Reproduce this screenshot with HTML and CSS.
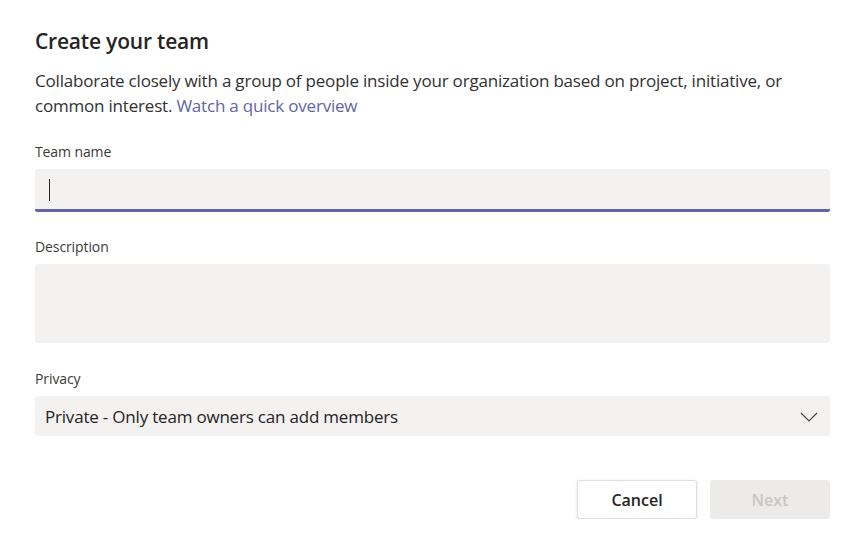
FILE: index.html
```html
<!DOCTYPE html>
<html>
<head>
<meta charset="utf-8">
<link rel="stylesheet" href="styles.css">
</head>
<body>
<div class="dialog">
  <h1 class="title">Create your team</h1>
  <p class="intro">Collaborate closely with a group of people inside your organization based on project, initiative, or common interest. <a class="link" href="#">Watch a quick overview</a></p>
  <div class="field field-name">
    <label class="label">Team name</label>
    <div class="input focused"><span class="caret"></span></div>
  </div>
  <div class="field field-desc">
    <label class="label">Description</label>
    <div class="textarea"></div>
  </div>
  <div class="field field-privacy">
    <label class="label">Privacy</label>
    <div class="select">
      <span class="select-text">Private - Only team owners can add members</span>
      <svg class="chevron" width="18" height="10" viewBox="0 0 18 10"><path d="M1 1 L9 9 L17 1" fill="none" stroke="#484644" stroke-width="1.2"/></svg>
    </div>
  </div>
  <div class="actions">
    <button class="btn btn-cancel">Cancel</button>
    <button class="btn btn-next">Next</button>
  </div>
</div>
</body>
</html>
```
FILE: styles.css
```css
* { box-sizing: border-box; }
html, body { margin: 0; padding: 0; background: #fff; }
body {
  font-family: "Open Sans", "Noto Sans", sans-serif;
  color: #252423;
}
.dialog {
  width: 861px;
  padding: 26px 31px 0 35px;
}
.title {
  margin: 0;
  font-size: 21px;
  font-weight: 600;
  line-height: 30px;
  letter-spacing: -0.2px;
}
.intro {
  margin: 12px 0 0;
  font-size: 17px;
  line-height: 25px;
  color: #323130;
  letter-spacing: -0.2px;
}
.link { color: #6264a7; text-decoration: none; }
.field { display: flex; flex-direction: column; }
.label {
  font-size: 14px;
  line-height: 20px;
  color: #3b3a39;
  letter-spacing: -0.1px;
}
.field-name { margin-top: 24px; }
.field-name .label { margin-bottom: 7px; }
.input {
  height: 43px;
  background: #f3f2f1;
  border-bottom: 3px solid #6264a7;
  border-radius: 3px 3px 2px 2px;
  display: flex;
  align-items: center;
  padding-left: 14px;
}
.caret {
  display: block;
  width: 1px;
  height: 22px;
  background: #252423;
  margin-top: 1px;
}
.field-desc { margin-top: 25px; }
.field-desc .label { margin-bottom: 7px; }
.textarea {
  height: 79px;
  background: #f3f2f1;
  border-radius: 3px;
}
.field-privacy { margin-top: 26px; }
.field-privacy .label { margin-bottom: 7px; }
.select {
  height: 40px;
  background: #f3f2f1;
  border-radius: 3px;
  display: flex;
  align-items: center;
  justify-content: space-between;
  padding: 0 12px 0 10px;
}
.select-text {
  font-size: 17px;
  color: #252423;
  letter-spacing: -0.2px;
}
.chevron { display: block; margin-top: 1px; }
.actions {
  display: flex;
  justify-content: flex-end;
  gap: 13px;
  margin-top: 44px;
}
.btn {
  width: 120px;
  height: 39px;
  font-family: inherit;
  font-size: 16px;
  font-weight: 600;
  border-radius: 3px;
  border: 1px solid transparent;
  padding: 0;
}
.btn-cancel {
  background: #fff;
  border-color: #e1dfdd;
  color: #252423;
  box-shadow: 0 1px 3px rgba(0,0,0,0.12);
}
.btn-next {
  background: #edebe9;
  color: #c8c6c4;
}
```
